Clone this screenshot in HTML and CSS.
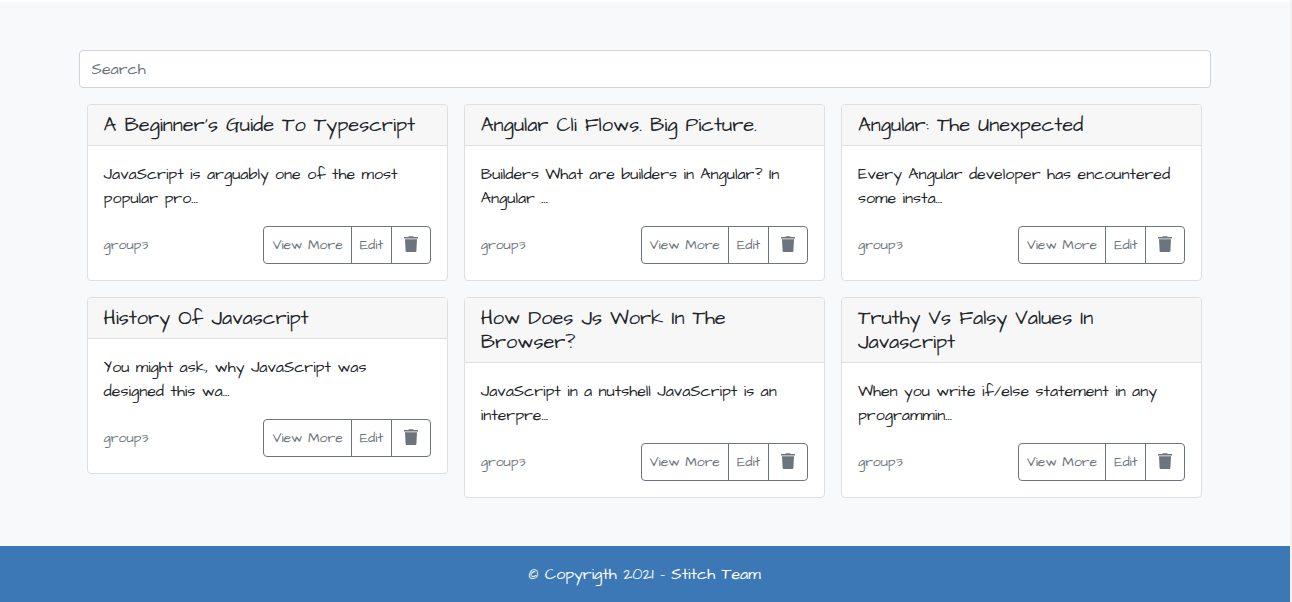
FILE: index.html
```
<!DOCTYPE html>
<html lang="en">
<head>
<meta charset="utf-8">
<title>Stitch</title>
<link rel="stylesheet" href="styles.css">
</head>
<body>
<svg width="0" height="0" class="defs"><symbol id="trash" viewBox="0 0 14 16"><path d="M.4 1H4.300l.6-.8h4.200l.6.8h3.900q.4 0 .4.500V2.500H0V1.500Q0 1 .4 1zM1 3.200h12l-.6 11.800Q12.300 16 11.400 16H2.600Q1.700 16 1.600 15z"/></symbol></svg>
<main class="page">
<input class="search" type="text" placeholder="Search">
<div class="grid">
<article class="card"><h5 class="title">A Beginner's Guide To Typescript</h5><div class="body"><p class="text">JavaScript is arguably one of the most popular pro...</p><div class="row"><small class="group">group3</small><div class="buttons"><button class="btn view">View More</button><button class="btn edit">Edit</button><button class="btn del" aria-label="Delete"><svg class="icon"><use href="#trash"/></svg></button></div></div></div></article>
<article class="card"><h5 class="title">Angular Cli Flows. Big Picture.</h5><div class="body"><p class="text">Builders What are builders in Angular? In Angular ...</p><div class="row"><small class="group">group3</small><div class="buttons"><button class="btn view">View More</button><button class="btn edit">Edit</button><button class="btn del" aria-label="Delete"><svg class="icon"><use href="#trash"/></svg></button></div></div></div></article>
<article class="card"><h5 class="title">Angular: The Unexpected</h5><div class="body"><p class="text">Every Angular developer has encountered some insta...</p><div class="row"><small class="group">group3</small><div class="buttons"><button class="btn view">View More</button><button class="btn edit">Edit</button><button class="btn del" aria-label="Delete"><svg class="icon"><use href="#trash"/></svg></button></div></div></div></article>
<article class="card"><h5 class="title">History Of Javascript</h5><div class="body"><p class="text">You might ask, why JavaScript was designed this wa...</p><div class="row"><small class="group">group3</small><div class="buttons"><button class="btn view">View More</button><button class="btn edit">Edit</button><button class="btn del" aria-label="Delete"><svg class="icon"><use href="#trash"/></svg></button></div></div></div></article>
<article class="card"><h5 class="title">How Does Js Work In The Browser?</h5><div class="body"><p class="text">JavaScript in a nutshell JavaScript is an interpre...</p><div class="row"><small class="group">group3</small><div class="buttons"><button class="btn view">View More</button><button class="btn edit">Edit</button><button class="btn del" aria-label="Delete"><svg class="icon"><use href="#trash"/></svg></button></div></div></div></article>
<article class="card"><h5 class="title">Truthy Vs Falsy Values In Javascript</h5><div class="body"><p class="text">When you write if/else statement in any programmin...</p><div class="row"><small class="group">group3</small><div class="buttons"><button class="btn view">View More</button><button class="btn edit">Edit</button><button class="btn del" aria-label="Delete"><svg class="icon"><use href="#trash"/></svg></button></div></div></div></article>
</div>
</main>
<footer class="footer">© Copyrigth 2021 - Stitch Team</footer>
</body>
</html>
```
FILE: styles.css
```
* { box-sizing: border-box; }
html { background: #f1f1f1; }
body { margin: 0; width: 1290px; height: 602px; overflow: hidden; display: flex; flex-direction: column; border-top: 2px solid #fff; background: #f8f9fa; color: #212529; font: 16px/24px "Architects Daughter", Lato, sans-serif; }
.defs { position: absolute; }
.page { height: 544px; padding: 48px 78.6px 0; }
.search { display: block; width: 1132px; height: 38px; padding: 6px 12px; border: 1px solid #ced4da; border-radius: 4px; background: #fff; font: inherit; }
.search::placeholder { color: #6c757d; opacity: 1; }
.grid { display: grid; width: 1131.5px; grid-template-columns: repeat(3, 1fr); gap: 16px; align-items: start; padding: 16px 8px 0; }
.card { border: 1px solid #dfdfdf; border-radius: 4px; background: #fff; overflow: hidden; }
.title { margin: 0; padding: 8px 16px; border-bottom: 1px solid #dfdfdf; background: #f7f7f7; font-size: 20px; line-height: 24px; font-weight: 400; }
.body { padding: 16px; }
.text { margin: 0 0 16px; }
.row { display: flex; justify-content: space-between; align-items: center; }
.group { font-size: 14px; color: #6c757d; }
.buttons { display: flex; width: 167.35px; height: 38px; border: 1px solid #6c757d; border-radius: 4px; }
.btn { padding: 0; border: 0; border-right: 1px solid #6c757d; background: none; color: #6c757d; font: 14px/21px "Architects Daughter", Lato, sans-serif; }
.view { width: 87.6px; }
.edit { width: 39.9px; }
.del { flex: 1; border-right: 0; display: flex; align-items: center; justify-content: center; }
.icon { width: 14px; height: 16px; fill: #6c757d; margin-bottom: 2px; }
.footer { height: 56px; padding: 16px 17px 16px 16px; background: #3c78b6; color: #fff; text-align: center; }
```
